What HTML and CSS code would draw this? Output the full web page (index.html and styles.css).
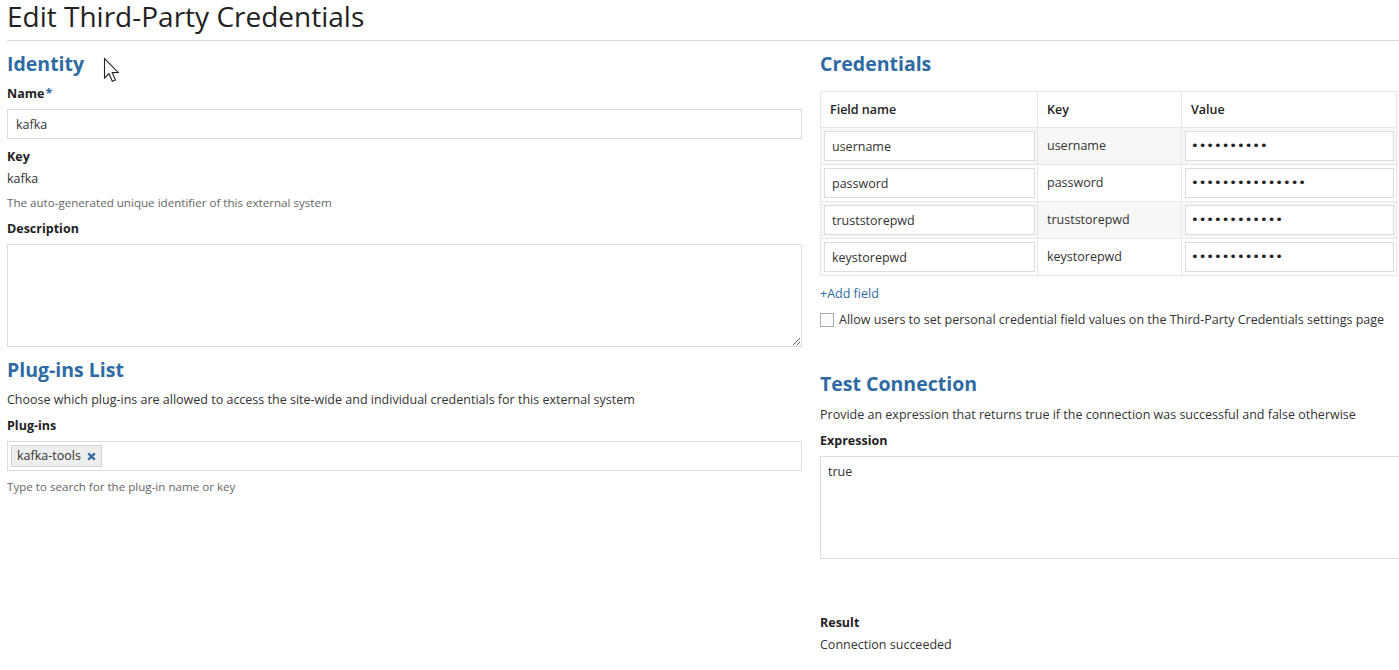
FILE: index.html
```html
<!DOCTYPE html>
<html lang="en">
<head>
<meta charset="utf-8">
<title>Edit Third-Party Credentials</title>
<link rel="stylesheet" href="styles.css">
</head>
<body>
<div class="page">
  <header class="page-head">
    <h1>Edit Third-Party Credentials</h1>
  </header>

  <div class="columns">
    <div class="col col-left">
      <section class="block">
        <h2 class="section-title">Identity</h2>
        <label class="field-label">Name<span class="req">*</span></label>
        <input class="text-input" type="text" value="kafka">

        <div class="field-label label-gap">Key</div>
        <div class="plain-value">kafka</div>
        <div class="hint">The auto-generated unique identifier of this external system</div>

        <label class="field-label">Description</label>
        <textarea class="text-area desc-area"></textarea>
      </section>

      <section class="block">
        <h2 class="section-title">Plug-ins List</h2>
        <p class="lead">Choose which plug-ins are allowed to access the site-wide and individual credentials for this external system</p>
        <label class="field-label">Plug-ins</label>
        <div class="tag-input">
          <span class="tag">kafka-tools
            <svg class="tag-remove" width="9" height="9" viewBox="0 0 9 9" aria-hidden="true"><path d="M1.2 1.2 L7.8 7.8 M7.8 1.2 L1.2 7.8" stroke="#2e6aa3" stroke-width="2.3" stroke-linecap="butt"/></svg>
          </span>
        </div>
        <div class="hint hint-below">Type to search for the plug-in name or key</div>
      </section>
    </div>

    <div class="col col-right">
      <section class="block">
        <h2 class="section-title">Credentials</h2>
        <table class="cred-table">
          <thead>
            <tr><th class="c-name">Field name</th><th class="c-key">Key</th><th class="c-val">Value</th></tr>
          </thead>
          <tbody>
            <tr>
              <td><input class="cell-input" type="text" value="username"></td>
              <td class="key-cell">username</td>
              <td><div class="cell-input secret">••••••••••</div></td>
            </tr>
            <tr>
              <td><input class="cell-input" type="text" value="password"></td>
              <td class="key-cell">password</td>
              <td><div class="cell-input secret">•••••••••••••••</div></td>
            </tr>
            <tr>
              <td><input class="cell-input" type="text" value="truststorepwd"></td>
              <td class="key-cell">truststorepwd</td>
              <td><div class="cell-input secret">••••••••••••</div></td>
            </tr>
            <tr>
              <td><input class="cell-input" type="text" value="keystorepwd"></td>
              <td class="key-cell">keystorepwd</td>
              <td><div class="cell-input secret">••••••••••••</div></td>
            </tr>
          </tbody>
        </table>
        <a class="add-link" href="#">+Add field</a>
        <label class="check-row"><span class="checkbox"></span>Allow users to set personal credential field values on the Third-Party Credentials settings page</label>
      </section>

      <section class="block test-block">
        <h2 class="section-title">Test Connection</h2>
        <p class="lead">Provide an expression that returns true if the connection was successful and false otherwise</p>
        <label class="field-label">Expression</label>
        <textarea class="text-area expr-area">true</textarea>

        <div class="field-label result-label">Result</div>
        <div class="plain-value">Connection succeeded</div>
      </section>
    </div>
  </div>
</div>

<svg class="pointer" width="20" height="28" viewBox="0 0 20 28" aria-hidden="true">
  <path d="M1.5 1.5 L1.5 21 L6 16.8 L9.3 24.3 L12.4 23 L9.2 15.6 L15.2 15.4 Z" fill="#fff" stroke="#222" stroke-width="1.1" stroke-linejoin="miter"/>
</svg>
</body>
</html>
```

FILE: styles.css
```css
html, body {
  margin: 0;
  padding: 0;
  background: #fff;
}

body {
  font-family: "Open Sans", "Noto Sans", sans-serif;
  font-size: 12.5px;
  line-height: 18px;
  color: #333;
  overflow: hidden;
  position: relative;
  width: 1399px;
  height: 670px;
}

.page {
  padding-left: 7px;
}

.page-head {
  border-bottom: 1px solid #d9d9d9;
  height: 41px;
  box-sizing: border-box;
}

.page-head h1 {
  margin: 0;
  font-size: 28px;
  font-weight: 400;
  line-height: 32px;
  color: #222;
}

.columns {
  display: grid;
  grid-template-columns: 795px 600px;
  column-gap: 18px;
}

.section-title {
  margin: 11px 0 9px;
  font-size: 19.5px;
  font-weight: 700;
  line-height: 24px;
  color: #2e6aa3;
}

.field-label {
  display: block;
  font-weight: 700;
  color: #222;
  margin-bottom: 6px;
}

.req {
  color: #2e6aa3;
  margin-left: 1px;
}

.text-input {
  display: block;
  box-sizing: border-box;
  width: 100%;
  height: 30px;
  margin: 0;
  padding: 0 8px;
  border: 1px solid #dcdcdc;
  font: inherit;
  color: #333;
  background: #fff;
  outline: none;
}

.label-gap {
  margin-top: 9px;
  margin-bottom: 4px;
}

.plain-value {
  color: #333;
}

.hint {
  font-size: 11.6px;
  line-height: 16px;
  color: #666;
  margin: 7px 0 9px;
}

.text-area {
  display: block;
  box-sizing: border-box;
  margin: 0;
  padding: 6px 7px;
  border: 1px solid #dcdcdc;
  font: inherit;
  color: #333;
  background: #fff;
  outline: none;
}

.desc-area {
  width: 100%;
  height: 103px;
  margin-bottom: 1px;
}

.lead {
  margin: 0 0 8px;
  color: #333;
}

.tag-input {
  box-sizing: border-box;
  height: 30px;
  border: 1px solid #dcdcdc;
  padding: 3px;
  display: flex;
  align-items: center;
}

.tag {
  display: inline-flex;
  align-items: center;
  height: 22px;
  box-sizing: border-box;
  padding: 0 5px;
  background: #eee;
  border: 1px solid #d5d5d5;
  color: #333;
}

.tag-remove {
  margin-left: 6px;
}

.hint-below {
  margin-top: 8px;
}

/* credentials table */
.cred-table {
  width: 577px;
  border-collapse: collapse;
  table-layout: fixed;
  margin-top: 15px;
}

.cred-table th,
.cred-table td {
  border: 1px solid #e6e6e6;
  padding: 2px 2px 2px 3px;
  height: 32px;
  text-align: left;
  color: #333;
}

.cred-table th {
  font-weight: 600;
  height: 31px;
  padding-left: 9px;
  color: #222;
}

.c-name { width: 205px; }
.c-key { width: 132px; }

.cred-table tbody tr:nth-child(odd) td {
  background: #f7f7f7;
}

.cred-table td.key-cell {
  padding-left: 9px;
}

.cell-input {
  display: block;
  box-sizing: border-box;
  width: 100%;
  height: 30px;
  margin: 0;
  padding: 0 7px;
  border: 1px solid #dcdcdc;
  font: inherit;
  color: #333;
  background: #fff;
  outline: none;
}

.secret {
  line-height: 28px;
  font-size: 13px;
  letter-spacing: 0;
  color: #222;
  font-family: "DejaVu Sans", sans-serif;
  padding-left: 5px;
}

.add-link {
  display: block;
  margin-top: 9px;
  color: #2e6aa3;
  text-decoration: none;
}

.check-row {
  display: flex;
  align-items: center;
  margin-top: 8px;
  color: #333;
}

.checkbox {
  width: 12px;
  height: 12px;
  border: 1px solid #aaa;
  background: #fff;
  margin-right: 5px;
}

.test-block .section-title {
  margin-top: 43px;
  margin-bottom: 10px;
}

.expr-area {
  width: 100%;
  height: 103px;
  resize: none;
}

.result-label {
  margin-top: 55px;
  margin-bottom: 4px;
}

.pointer {
  position: absolute;
  left: 103px;
  top: 57px;
}
```
